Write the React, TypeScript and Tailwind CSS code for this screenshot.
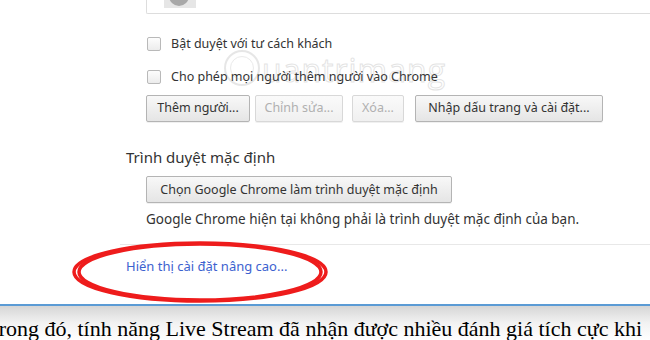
import React from 'react'

const ui = { fontFamily: '"Noto Sans", "Open Sans", Arial, sans-serif' }

const Checkbox = ({ label }: { label: string }) => (
  <label className="flex items-center gap-[10px] h-[16px]">
    <span className="w-[14px] h-[14px] rounded-[2px] border border-[#b9b9b9] bg-gradient-to-b from-[#fdfdfd] to-[#ececec]" />
    <span className="text-[12.5px] text-[#333]">{label}</span>
  </label>
)

const Btn = ({
  children,
  disabled,
  className = '',
}: {
  children: React.ReactNode
  disabled?: boolean
  className?: string
}) => (
  <button
    disabled={disabled}
    className={
      'h-[27px] px-0 rounded-[2px] border text-[12.5px] whitespace-nowrap bg-gradient-to-b shadow-[0_1px_0_rgba(0,0,0,0.06)] ' +
      (disabled
        ? 'border-[#d8d8d8] from-[#fafafa] to-[#f0f0f0] text-[#b0b0b0] '
        : 'border-[#b4b4b4] from-[#f8f8f8] to-[#e5e5e5] text-[#333] ') +
      className
    }
  >
    {children}
  </button>
)

export default function App() {
  return (
    <div className="relative w-[650px] h-[340px] overflow-hidden bg-white" style={ui}>
      <div className="h-[304px]">
        {/* tail of the profile list card */}
        <div className="ml-[146px] h-[14px] border-l border-b border-[#dddddd] rounded-bl-[2px] pl-[17px]">
          <div className="relative w-[32px] h-[8px] bg-[#e6e6e6] overflow-hidden">
            <div className="absolute left-[5px] -top-[14px] w-[20px] h-[20px] rounded-full bg-[#a8a8a8]" />
          </div>
        </div>

        <div className="ml-[147px] mt-[22px] flex flex-col gap-[17px]">
          <Checkbox label="Bật duyệt với tư cách khách" />
          <Checkbox label="Cho phép mọi người thêm người vào Chrome" />
        </div>

        <div className="ml-[146px] mt-[10px] flex">
          <Btn className="w-[104px]">Thêm người...</Btn>
          <Btn disabled className="w-[88px] ml-[5px]">Chỉnh sửa...</Btn>
          <Btn disabled className="w-[52px] ml-[9px]">Xóa...</Btn>
          <Btn className="w-[188px] ml-[11px]">Nhập dấu trang và cài đặt...</Btn>
        </div>

        <div className="ml-[126px] mt-[24px] text-[15px] text-[#333]">Trình duyệt mặc định</div>
        <div className="ml-[146px] mt-[7px]">
          <Btn className="w-[306px]">Chọn Google Chrome làm trình duyệt mặc định</Btn>
        </div>
        <div className="ml-[146px] mt-[6px] text-[13.5px] text-[#333] whitespace-nowrap">
          Google Chrome hiện tại không phải là trình duyệt mặc định của bạn.
        </div>

        <div className="ml-[120px] mt-[14px] border-t border-[#e8e8e8]" />
        <div className="ml-[126px] mt-[12px] text-[13px] text-[#3c62cf]">Hiển thị cài đặt nâng cao...</div>
      </div>

      {/* article text below the screenshot */}
      <div className="h-[2px] bg-[#5b9bd5]" />
      <div className="h-[34px] bg-gradient-to-b from-[#d6d6d6] via-[#f2f2f2] to-white pt-[10px]">
        <div
          className="whitespace-nowrap text-[22px] leading-[26px] text-black -ml-[14px]"
          style={{ fontFamily: '"Liberation Serif", "Times New Roman", serif' }}
        >
          Trong đó, tính năng Live Stream đã nhận được nhiều đánh giá tích cực khi
        </div>
      </div>

      {/* watermark */}
      <div className="absolute left-[224px] top-[50px] flex items-end opacity-[0.2] pointer-events-none select-none">
        <div className="w-[36px] h-[36px] rounded-full border-[2px] border-[#888] flex items-center justify-center mr-[2px]">
          <div className="w-[24px] h-[24px] rounded-full border border-[#999]" />
        </div>
        <span
          className="text-[32px] leading-[32px] text-transparent tracking-[1px]"
          style={{ WebkitTextStroke: '1px #777', fontFamily: '"Open Sans", sans-serif' }}
        >
          uantrimang
        </span>
      </div>

      {/* red hand-drawn ellipse */}
      <svg className="absolute left-0 top-0 pointer-events-none" width="650" height="340">
        <ellipse cx="200" cy="272" rx="126" ry="29" fill="none" stroke="#ee1c1c" strokeWidth="3.5" />
        <ellipse cx="200" cy="272" rx="121" ry="28" fill="none" stroke="#ee1c1c" strokeWidth="3.5" />
      </svg>
    </div>
  )
}
